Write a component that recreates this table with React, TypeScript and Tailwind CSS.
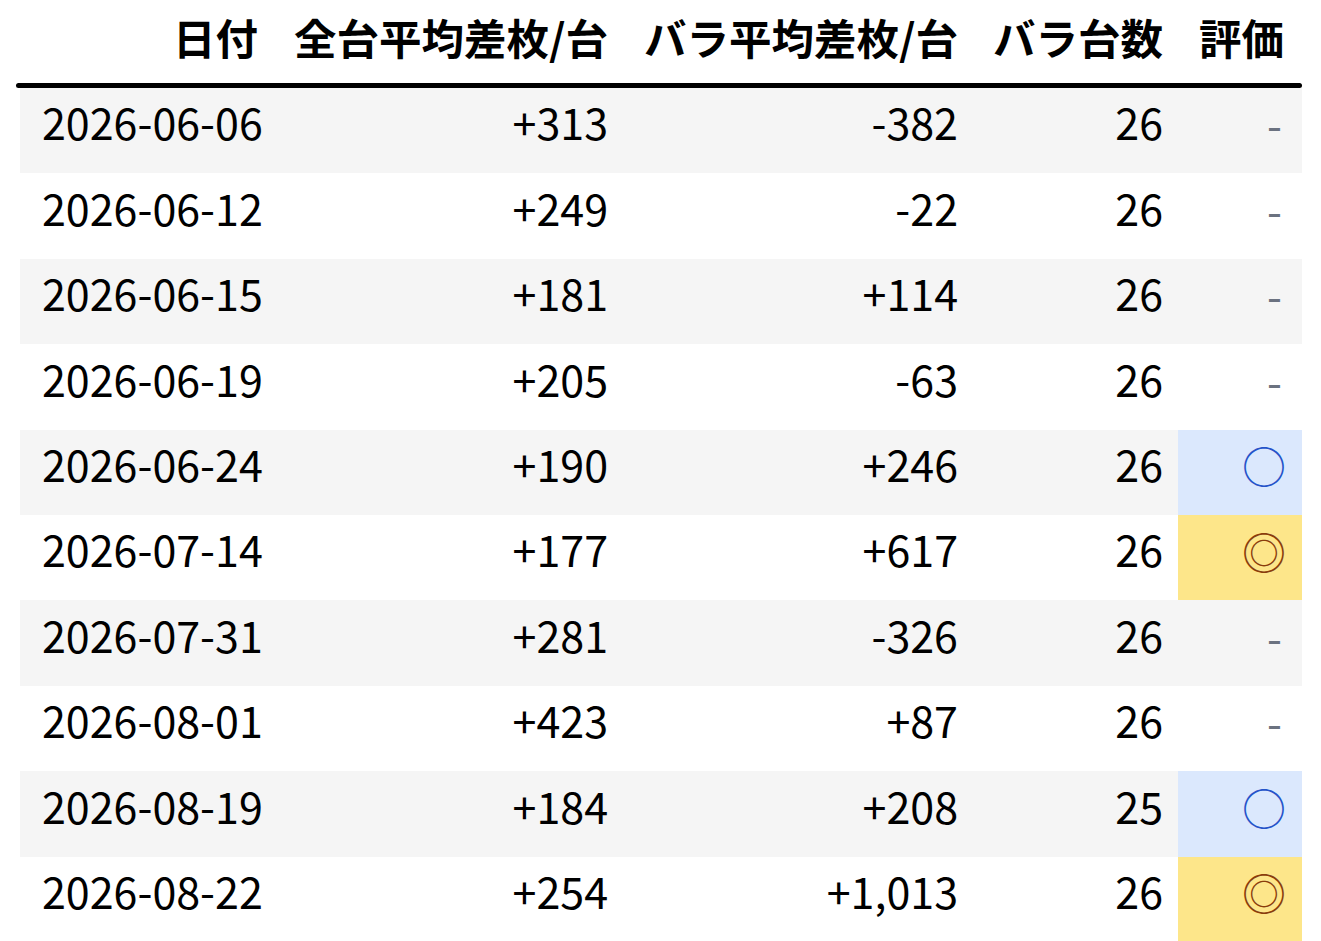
import React from 'react';

type Row = { date: string; all: string; bara: string; count: number; grade: '-' | 'o' | 'oo' };

const rows: Row[] = [
  { date: '2026-06-06', all: '+313', bara: '-382', count: 26, grade: '-' },
  { date: '2026-06-12', all: '+249', bara: '-22', count: 26, grade: '-' },
  { date: '2026-06-15', all: '+181', bara: '+114', count: 26, grade: '-' },
  { date: '2026-06-19', all: '+205', bara: '-63', count: 26, grade: '-' },
  { date: '2026-06-24', all: '+190', bara: '+246', count: 26, grade: 'o' },
  { date: '2026-07-14', all: '+177', bara: '+617', count: 26, grade: 'oo' },
  { date: '2026-07-31', all: '+281', bara: '-326', count: 26, grade: '-' },
  { date: '2026-08-01', all: '+423', bara: '+87', count: 26, grade: '-' },
  { date: '2026-08-19', all: '+184', bara: '+208', count: 25, grade: 'o' },
  { date: '2026-08-22', all: '+254', bara: '+1,013', count: 26, grade: 'oo' },
];

const cols = 'grid grid-cols-[256px_348px_350px_204px_124px]';

function Grade({ g }: { g: Row['grade'] }) {
  if (g === 'o') {
    return <div className="flex h-full items-center justify-end bg-[#dbe8fd] pr-[16px] pb-[14px] text-[44px] text-[#2553c9]">○</div>;
  }
  if (g === 'oo') {
    return <div className="flex h-full items-center justify-end bg-[#fde68a] pr-[16px] pb-[14px] text-[44px] text-[#8a3d0c]">◎</div>;
  }
  return <div className="flex h-full items-center justify-end pr-[20px] pb-[14px] text-[#6b7280]">-</div>;
}

export default function App() {
  return (
    <div className="min-h-[941px] bg-white text-black" style={{ fontFamily: '"Noto Sans CJK JP", "Noto Sans", sans-serif' }}>
      <div className="ml-[20px] w-[1282px]">
        <div className={`${cols} h-[83px] items-center pb-[10px] text-[42.5px] font-bold`}>
          <div className="pr-[18px] text-right">日付</div>
          <div className="pr-[16px] text-right">全台平均差枚/台</div>
          <div className="pr-[16px] text-right">バラ平均差枚/台</div>
          <div className="pr-[15px] text-right">バラ台数</div>
          <div className="pr-[18px] text-right">評価</div>
        </div>
        <div className="-ml-[4px] h-[5px] w-[1286px] rounded-full bg-black" />
        {rows.map((r, i) => (
          <div key={r.date} className={`${cols} h-[85.4px] text-[43px] ${i % 2 === 0 ? 'bg-[#f5f5f5]' : 'bg-white'}`}>
            <div className="flex items-center pb-[18px] pl-[22px]">{r.date}</div>
            <div className="flex items-center justify-end pb-[18px] pr-[16px]">{r.all}</div>
            <div className="flex items-center justify-end pb-[18px] pr-[16px]">{r.bara}</div>
            <div className="flex items-center justify-end pb-[18px] pr-[15px]">{r.count}</div>
            <Grade g={r.grade} />
          </div>
        ))}
      </div>
    </div>
  );
}
